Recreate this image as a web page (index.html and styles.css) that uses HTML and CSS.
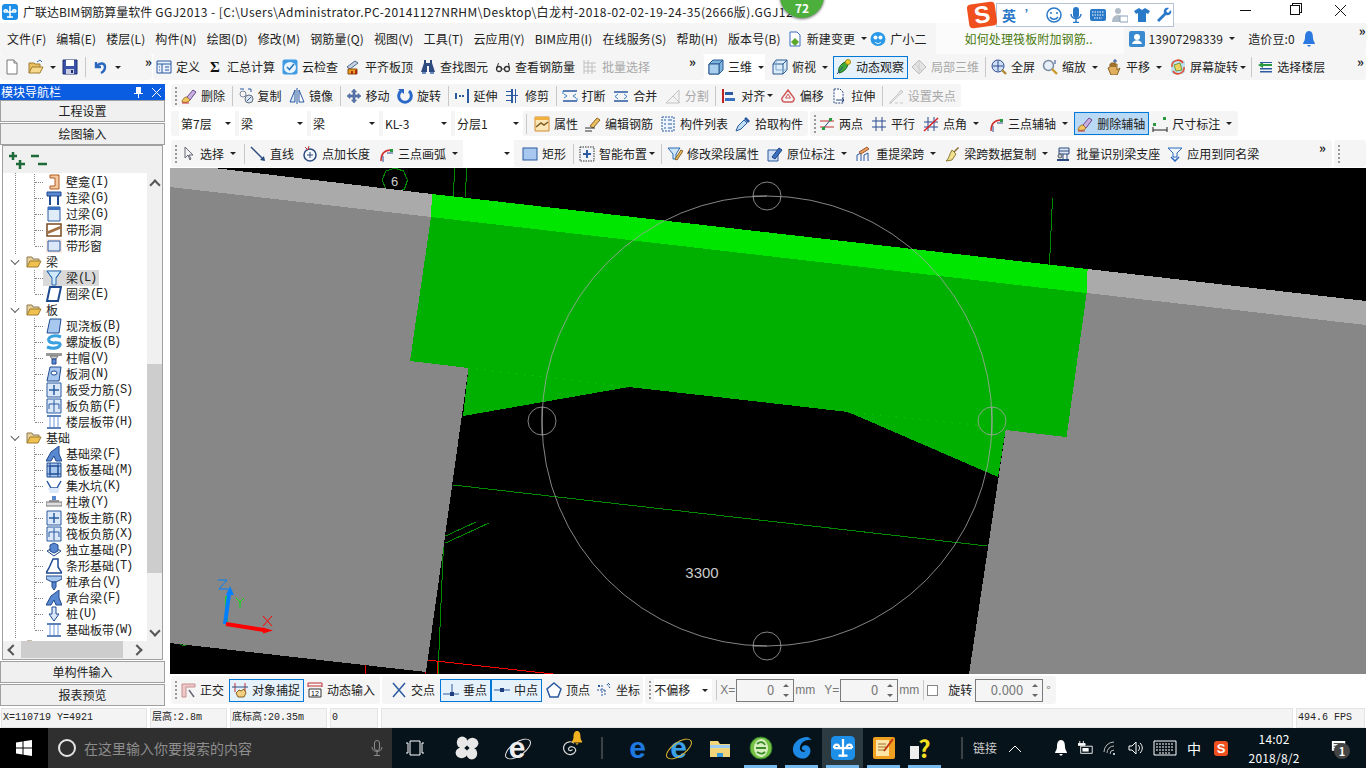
FILE: index.html
```html
<!DOCTYPE html>
<html lang="zh-CN">

<head>
    <meta charset="UTF-8">
    <title>广联达BIM钢筋算量软件 GGJ2013</title>
    <link rel="stylesheet" href="styles.css">
</head>

<body>
    <!-- Icon set -->
    <svg class="defs" width="0" height="0">
        <symbol id="new" viewBox="0 0 16 16"><path d="M3 1h7l3 3v11H3z" fill="#fff" stroke="#777"/><path d="M10 1v3h3" fill="#ddd" stroke="#777"/></symbol>
        <symbol id="open" viewBox="0 0 16 16"><path d="M1 14V4h5l1 1h5v3" fill="#e8c060" stroke="#a07c30"/><path d="M1 14l3-6h11l-3 6z" fill="#f6d98a" stroke="#a07c30"/><path d="M9 3l3-2 2 2" fill="none" stroke="#3a70c0"/></symbol>
        <symbol id="save" viewBox="0 0 16 16"><path d="M1 1h14v14H1z" fill="#3a52a8" stroke="#1f2f70"/><path d="M4 1h8v6H4z" fill="#fff"/><path d="M4 10h8v5H4z" fill="#c8cce0"/><path d="M9 11h2v3H9z" fill="#1f2f70"/></symbol>
        <symbol id="undo" viewBox="0 0 16 16"><path d="M3 3v5h5M4 7c3-4 8-3 8 1 0 3-2 5-4 6" fill="none" stroke="#2a68c0" stroke-width="2.4"/></symbol>
        <symbol id="define" viewBox="0 0 16 16"><path d="M1 2h14v12H1z" fill="#e8f0fa" stroke="#2a5aa0"/><path d="M1 5h14M6 5v9M9 8h4M9 11h4M3 8h1M3 11h1" stroke="#2a5aa0"/></symbol>
        <symbol id="cloud" viewBox="0 0 16 16"><rect x="0.5" y="0.5" width="15" height="15" rx="2" fill="#3f9be4"/><ellipse cx="8" cy="8.500" rx="6" ry="5.500" fill="#eaf5fd"/><path d="M5 8l2.500 2.500L12 5" fill="none" stroke="#2a78c0" stroke-width="1.600"/></symbol>
        <symbol id="flat" viewBox="0 0 16 16"><path d="M2 8l8-6 3 2-8 6z" fill="#c8d4e4" stroke="#4a6a90"/><path d="M3 10h9v5H3z" fill="#e8a020" stroke="#8a4a10"/><path d="M6 12h2v3H6zM10 11h2v4h-2z" fill="#b02a10"/></symbol>
        <symbol id="binoc" viewBox="0 0 16 16"><path d="M4 1h2v3h4V1h2v3l3 9H9V7H7v6H1l3-9z" fill="#2f4a80"/><path d="M2 13h4v2H2zM10 13h4v2h-4z" fill="#6a8ac0"/></symbol>
        <symbol id="glasses" viewBox="0 0 16 16"><circle cx="4" cy="10" r="2.500" fill="none" stroke="#333" stroke-width="1.300"/><circle cx="12" cy="10" r="2.500" fill="none" stroke="#333" stroke-width="1.300"/><path d="M6.500 10h3M1.500 10l2-6M14.500 10l-1-6" fill="none" stroke="#333"/></symbol>
        <symbol id="batch" viewBox="0 0 16 16"><path d="M2 1v14M2 4h12M2 8h12M2 12h12M6 1v14M10 4v11" fill="none" stroke="#c0c0c0"/></symbol>
        <symbol id="cube" viewBox="0 0 16 16"><path d="M1 5l4-4h10v10l-4 4H1z" fill="#7fb4e0" stroke="#2a5a90"/><path d="M1 5h10v10M11 5l4-4" fill="none" stroke="#2a5a90"/><path d="M1 5h10v10H1z" fill="#a8d0ee" stroke="#2a5a90"/></symbol>
        <symbol id="top" viewBox="0 0 16 16"><path d="M4 1h11v10l-4 4H1V5z" fill="#dcecf8" stroke="#2a5a90"/><path d="M1 5h10v10M11 5l4-4" fill="none" stroke="#2a5a90"/><path d="M4 1v10h11" fill="none" stroke="#7fa8d0"/></symbol>
        <symbol id="orbit" viewBox="0 0 16 16"><path d="M3 14C1 9 6 3 12 2c1 5-3 11-9 12z" fill="#3fa83a" stroke="#1f6a20"/><circle cx="12" cy="3" r="2.500" fill="#f0d030" stroke="#a08a10"/><path d="M1 15L7 8" stroke="#2a4a90"/></symbol>
        <symbol id="local3d" viewBox="0 0 16 16"><path d="M1 8l7-7 7 7-7 7z" fill="#e4e4e4" stroke="#bbb"/><path d="M4 5l7 7M8 1v14" stroke="#ccc"/></symbol>
        <symbol id="full" viewBox="0 0 16 16"><circle cx="7" cy="7" r="6" fill="#cfe0f4" stroke="#2a4a90"/><path d="M7 2v10M2 7h10" stroke="#2a4a90"/><path d="M11 11l4 4" stroke="#b08a30" stroke-width="2.400"/></symbol>
        <symbol id="zoom" viewBox="0 0 16 16"><circle cx="6.500" cy="6.500" r="5" fill="#e6eef8" stroke="#7a8aa0" stroke-width="1.500"/><path d="M10 10l5 5" stroke="#c89a30" stroke-width="2.400"/><path d="M13 1v4" stroke="#2a4a90"/></symbol>
        <symbol id="pan" viewBox="0 0 16 16"><path d="M4 8V5h1v3-4h2v4-4h2v4-3h2v6l3-2-3 7H5L2 9z" fill="#e0b060" stroke="#8a6020"/><path d="M9 0v4M7 2h4" stroke="#2a4a90"/></symbol>
        <symbol id="rot" viewBox="0 0 16 16"><path d="M3 1h10l2 2v10l-2 2H3l-2-2V3z" fill="#bfe0f0"/><path d="M4 6l6-2 2 7-6 1z" fill="#f0d060" stroke="#60a040"/><path d="M2 8a6 6 0 0 1 11-4M14 8a6 6 0 0 1-11 4" fill="none" stroke="#e04a30" stroke-width="1.500"/></symbol>
        <symbol id="floor" viewBox="0 0 16 16"><path d="M1 6L6 3v6zM6 5h9v2H6z" fill="#2a9a40"/><path d="M3 9h12v1.500H3zM3 12h12v1.500H3zM3 3h12v1H3z" fill="#2a5aa0"/></symbol>
        <symbol id="erase" viewBox="0 0 16 16"><path d="M6 9l6-7 3 2-6 8z" fill="#c8b0e0" stroke="#6a4a90"/><path d="M1 14c1-4 3-5 5-5l3 3c-1 2-4 3-8 2z" fill="#f0c860" stroke="#a07030"/><path d="M1 15h7" stroke="#d03030"/></symbol>
        <symbol id="copy" viewBox="0 0 16 16"><circle cx="5" cy="6" r="3" fill="none" stroke="#7a8a9a"/><circle cx="11" cy="11" r="4" fill="#dfe6ee" stroke="#5a6a7a"/><path d="M9 13l4-4M2 1h4M10 1h3v3" fill="none" stroke="#2a5aa0"/></symbol>
        <symbol id="mirror" viewBox="0 0 16 16"><path d="M6 2L1 14h5z" fill="#dbe8f6" stroke="#2a5aa0"/><path d="M10 2l5 12h-5z" fill="#fff" stroke="#2a5aa0"/><path d="M8 0v16" stroke="#2a5aa0"/></symbol>
        <symbol id="move" viewBox="0 0 16 16"><path d="M8 1L5.500 4H7v3H4V5.500L1 8l3 2.500V9h3v3H5.500L8 15l2.500-3H9V9h3v1.500L15 8l-3-2.500V7H9V4h1.500z" fill="#5a7ab0" stroke="#2a4a80" stroke-width=".5"/></symbol>
        <symbol id="rotate" viewBox="0 0 16 16"><path d="M4 3a6.300 6.300 0 1 0 8 0" fill="none" stroke="#2a68c8" stroke-width="3"/><path d="M1 1h6v5z" fill="#2a68c8"/></symbol>
        <symbol id="extend" viewBox="0 0 16 16"><path d="M1 5h2v6H1zM5 7h2v2H5zM8 7h2v2H8zM13 1h2v14h-2z" fill="#2a5aa0"/></symbol>
        <symbol id="trim" viewBox="0 0 16 16"><path d="M1 3h6v1H1zM1 7h12v1H1zM1 12h6v1H1zM6 1h2v14H6zM10 1h1v14h-1z" fill="#2a5aa0"/></symbol>
        <symbol id="break" viewBox="0 0 16 16"><path d="M1 3h14M1 13h14" stroke="#2a5aa0" stroke-width="1.500"/><path d="M2 6l3 2-3 2M14 6l-3 2 3 2M1 3v3M15 10v3" fill="none" stroke="#3a80d0"/></symbol>
        <symbol id="merge" viewBox="0 0 16 16"><path d="M1 4h14M1 13h14" stroke="#2a5aa0" stroke-width="1.500"/><path d="M5 6L2 8.500 5 11M11 6l3 2.500-3 2.500" fill="none" stroke="#3a80d0"/></symbol>
        <symbol id="split" viewBox="0 0 16 16"><path d="M1 15L14 2v13zM8 8l7 7" fill="#f2f2f2" stroke="#c4c4c4"/></symbol>
        <symbol id="align" viewBox="0 0 16 16"><path d="M2 1v14" stroke="#c02020" stroke-width="2"/><path d="M4 4h8v3H4z" fill="#2a5aa0"/><path d="M4 10h10v3H4z" fill="#3a70c0"/></symbol>
        <symbol id="offset" viewBox="0 0 16 16"><path d="M8 2l6 8a3 3 0 0 1-3 4H5a3 3 0 0 1-3-4z" fill="#f4f4f4" stroke="#d05a5a" stroke-width="1.500"/><path d="M8 6l2.500 4h-5z" fill="none" stroke="#d05a5a"/></symbol>
        <symbol id="stretch" viewBox="0 0 16 16"><path d="M3 1h6l3 3v11H3z" fill="#fff" stroke="#2a4a80" stroke-dasharray="2 1"/><path d="M5 12h8M11 10l2 2-2 2" fill="none" stroke="#2a4a80"/></symbol>
        <symbol id="grip" viewBox="0 0 16 16"><path d="M2 14l8-8 3-4 2 2-4 3-8 8z" fill="#e8e8e8" stroke="#c8c8c8"/><path d="M1 15h3M7 15h3M12 15h3" stroke="#c8c8c8"/></symbol>
        <symbol id="prop" viewBox="0 0 16 16"><path d="M1 1h14v14H1z" fill="#fbe6b8" stroke="#d08a30"/><path d="M1 1h14v3H1z" fill="#f0b040"/><path d="M2 11l5-4 3 2 4-3" fill="none" stroke="#7a5a20" stroke-width="1.500"/></symbol>
        <symbol id="editbar" viewBox="0 0 16 16"><path d="M5 10l7-8 3 2-7 8z" fill="#e8c060" stroke="#8a6020"/><path d="M0 12h10M0 15h7" stroke="#333"/></symbol>
        <symbol id="list" viewBox="0 0 16 16"><path d="M2 1h12v14H2z" fill="#eef4fb" stroke="#2a5aa0" stroke-dasharray="2 1"/><path d="M4 4h2M8 4h4M4 8h2M8 8h4M4 12h2M8 12h4" stroke="#2a5aa0"/></symbol>
        <symbol id="pick" viewBox="0 0 16 16"><path d="M1 15l2-5 6-6 3 3-6 6z" fill="#bfe0f4" stroke="#2a5aa0"/><path d="M9 3l2-2 4 4-2 2z" fill="#2a5aa0"/></symbol>
        <symbol id="twopt" viewBox="0 0 16 16"><path d="M1 5h14M1 11h14" stroke="#c03030"/><path d="M3 14L13 2" stroke="#2a4a80"/><rect x="10" y="2" width="3" height="3" fill="#2a9a40"/><rect x="3" y="11" width="3" height="3" fill="#2a9a40"/></symbol>
        <symbol id="para" viewBox="0 0 16 16"><path d="M1 5h14M1 11h14M5 1v14M11 1v14" stroke="#2a4a90"/></symbol>
        <symbol id="angle" viewBox="0 0 16 16"><path d="M5 1v14M11 1v14M1 6h14M1 11h14" stroke="#2a4a90"/><path d="M1 15L15 2" stroke="#e02020" stroke-width="1.500"/></symbol>
        <symbol id="arc3" viewBox="0 0 16 16"><path d="M3 15c0-8 4-11 10-11" fill="none" stroke="#d02a2a" stroke-width="1.500"/><path d="M9 7h6M5 10v6" stroke="#2a4a90"/><rect x="12" y="3" width="3" height="3" fill="#2a9a40"/></symbol>
        <symbol id="dim" viewBox="0 0 16 16"><path d="M1 11v5M15 11v5M1 14h14" stroke="#222"/><rect x="1" y="7" width="3" height="3" fill="#2a9a40"/><rect x="11" y="1" width="3" height="3" fill="#2a9a40"/></symbol>
        <symbol id="arrow" viewBox="0 0 16 16"><path d="M5 1v11l3-3 2 5 1-1-2-4h4z" fill="#f4f4f4" stroke="#667"/></symbol>
        <symbol id="line" viewBox="0 0 16 16"><path d="M1 1l13 13" stroke="#2a4a80" stroke-width="1.500"/><path d="M15 15l-5-1 4-4z" fill="#2a4a80"/></symbol>
        <symbol id="ptlen" viewBox="0 0 16 16"><circle cx="8" cy="9" r="6" fill="#f4f8fd" stroke="#2a4a80" stroke-width="1.500"/><path d="M8 6v6M5 9h6" stroke="#2a4a80"/><path d="M3 1l3 3 1-4" fill="none" stroke="#c03030"/></symbol>
        <symbol id="rect" viewBox="0 0 16 16"><rect x="1" y="2" width="14" height="12" fill="#a8c8f0" stroke="#2a5aa0"/></symbol>
        <symbol id="smart" viewBox="0 0 16 16"><path d="M1 1h14v14H1z" fill="#f0f4f8" stroke="#333" stroke-dasharray="1.500 1"/><path d="M8 4v8M4 8h8" stroke="#2a5aa0" stroke-width="2"/></symbol>
        <symbol id="beamedit" viewBox="0 0 16 16"><path d="M1 2h12L9 8v5H6V8z" fill="#cfe6fa" stroke="#2a6ab0"/><path d="M8 13l6-9 2 1-6 9z" fill="#e8c060" stroke="#8a6020"/></symbol>
        <symbol id="origin" viewBox="0 0 16 16"><path d="M1 4h10v11H1z" fill="#cfe0f4" stroke="#2a5aa0"/><path d="M5 11l7-9 3 2-7 9z" fill="#3a70c0" stroke="#1f3f80"/></symbol>
        <symbol id="repick" viewBox="0 0 16 16"><path d="M1 15V9l4-2v8M8 15V9l4-2v8" fill="none" stroke="#2a5aa0"/><path d="M3 6l8-5 2 2-8 5z" fill="#e8a060" stroke="#a05a30"/></symbol>
        <symbol id="brush" viewBox="0 0 16 16"><path d="M9 6l5-5 1 1-5 5z" fill="#8a6a30"/><path d="M8 4l4 4-4 6-6 1c3-2 3-6 6-11z" fill="#f0e090" stroke="#8a7a30"/></symbol>
        <symbol id="recog" viewBox="0 0 16 16"><path d="M3 2h10v6H3z" fill="#dfe8f4" stroke="#2a4a80"/><path d="M3 5h10M7 8v5M11 8v5" stroke="#2a4a80"/><path d="M1 14h12" stroke="#2a4a80" stroke-width="2"/><circle cx="4" cy="10" r="2" fill="#c0d0e0" stroke="#555"/></symbol>
        <symbol id="samename" viewBox="0 0 16 16"><path d="M1 2h14l-5 5v4H6V7z" fill="#f0f6fc" stroke="#2a68c0"/><path d="M4 11l4 4 4-4" fill="none" stroke="#2a68c0" stroke-width="1.500"/></symbol>
        <symbol id="ortho" viewBox="0 0 16 16"><path d="M2 2h13v3H6v10H2z" fill="#f0c8c8" stroke="#c49090"/><path d="M9 8l5 7" stroke="#667" stroke-width="1.500"/></symbol>
        <symbol id="snap" viewBox="0 0 16 16"><path d="M3 1v9M13 1v9" stroke="#c03030"/><path d="M0 5h16" stroke="#2a4a80"/><path d="M4 11l3-3 2 1 3-2 2 4-2 4H6z" fill="#f0d080" stroke="#8a6020"/></symbol>
        <symbol id="cross" viewBox="0 0 16 16"><path d="M2 1l12 14M14 1L2 15" stroke="#2a5aa0" stroke-width="1.500"/></symbol>
        <symbol id="perp" viewBox="0 0 16 16"><path d="M0 12h16M9 2v12" stroke="#2a5aa0"/><rect x="7" y="10" width="4" height="4" fill="#1f3f80"/></symbol>
        <symbol id="mid" viewBox="0 0 16 16"><path d="M0 8h16" stroke="#2a5aa0"/><rect x="6" y="6" width="4" height="4" fill="#1f3f80"/></symbol>
        <symbol id="vertex" viewBox="0 0 16 16"><path d="M8 1l7 6-3 8H4L1 7z" fill="#fff" stroke="#2a5aa0" stroke-width="1.500"/></symbol>
        <symbol id="coord" viewBox="0 0 16 16"><path d="M1 8h8M6 3v12M9 8v5M11 2l3 4" fill="none" stroke="#2a5aa0" stroke-dasharray="2 1"/><path d="M2 3l2 2M4 3L2 5M12 1l2 2" stroke="#2a5aa0"/></symbol>
        <symbol id="plus" viewBox="0 0 18 18"><path d="M1 5h8M5 1v8M8 13h9M12 9v9" stroke="#1f6a3a" stroke-width="2.500"/></symbol>
        <symbol id="minus" viewBox="0 0 18 18"><path d="M1 5h8M8 13h9" stroke="#1f6a3a" stroke-width="2.500"/></symbol>
        <symbol id="folder" viewBox="0 0 16 16"><path d="M1 13V3h5l1 2h6v3" fill="#e8d098" stroke="#8a7a50"/><path d="M1 13l3-6h11l-3 6z" fill="#f0c050" stroke="#a07c30"/></symbol>
        <symbol id="t-niche" viewBox="0 0 16 16"><path d="M4 1h9v14H4v-3h5V4H4z" fill="#f4c8a0" stroke="#b05a20"/></symbol>
        <symbol id="t-lintel" viewBox="0 0 16 16"><path d="M1 2h14v4H1z" fill="#5a88d0" stroke="#1f4a90"/><path d="M4 6v9M12 6v9" stroke="#1f4a90" stroke-width="2"/></symbol>
        <symbol id="t-over" viewBox="0 0 16 16"><path d="M2 1h12v14H2z" fill="#e0ecf8" stroke="#2a5aa0"/><path d="M2 1h12v3H2z" fill="#3a70c0"/></symbol>
        <symbol id="t-bandhole" viewBox="0 0 16 16"><path d="M1 2h14v12H1z" fill="#fff" stroke="#7a4a20" stroke-width="1.500"/><path d="M2 9l12-5v3L2 12z" fill="#a07040"/></symbol>
        <symbol id="t-bandwin" viewBox="0 0 16 16"><path d="M0 1h16v14H0z" fill="#fbe8e0"/><path d="M2 3h12v10H2z" fill="#dbe8fa" stroke="#2a5aa0"/></symbol>
        <symbol id="t-beam" viewBox="0 0 16 16"><path d="M1 1h14L10 8v7H6V8z" fill="#cfe8fa" stroke="#2a6ab0"/><path d="M6 8L1 1M10 8l5-7" fill="none" stroke="#2a6ab0"/></symbol>
        <symbol id="t-ring" viewBox="0 0 16 16"><path d="M4 1h11l-3 14H1z" fill="#fff" stroke="#1f4a90" stroke-width="2"/></symbol>
        <symbol id="t-slab" viewBox="0 0 16 16"><path d="M4 1h11l-2 14H1z" fill="#a8c8f0" stroke="#1f4a90"/></symbol>
        <symbol id="t-spiral" viewBox="0 0 16 16"><path d="M15 3C8 0 1 3 3 7s10 0 11 3-6 6-13 3" fill="none" stroke="#3aa0e0" stroke-width="3"/></symbol>
        <symbol id="t-cap" viewBox="0 0 16 16"><path d="M0 3h16v3H0z" fill="#999"/><path d="M4 6h8l-2 3H6z" fill="#ccc" stroke="#777"/><path d="M6 9h4v5H6z" fill="#5a88d0" stroke="#1f4a90"/></symbol>
        <symbol id="t-hole" viewBox="0 0 16 16"><path d="M4 1h11l-2 14H1z" fill="#a8c8f0" stroke="#1f4a90"/><ellipse cx="8" cy="7" rx="3" ry="2" fill="#fff" stroke="#1f4a90"/></symbol>
        <symbol id="t-grid1" viewBox="0 0 16 16"><path d="M1 1h14v14H1z" fill="#dbe8fa" stroke="#2a5aa0"/><path d="M8 3v10M3 8h10" stroke="#2a5aa0" stroke-width="1.500"/></symbol>
        <symbol id="t-grid2" viewBox="0 0 16 16"><path d="M1 1h14v14H1z" fill="#dbe8fa" stroke="#2a5aa0"/><path d="M3 6h10v5M3 6v5M8 2v12" fill="none" stroke="#2a5aa0"/></symbol>
        <symbol id="t-band" viewBox="0 0 16 16"><path d="M1 2h14M1 14h14" stroke="#2a5aa0" stroke-width="1.500"/><path d="M4 3v10M8 3v10M12 3v10" stroke="#6a98d8"/></symbol>
        <symbol id="t-fbeam" viewBox="0 0 16 16"><path d="M0 15l5-9 8-6v8l3 7H10L8 10 5 15z" fill="#5a88d0" stroke="#1f4a90"/></symbol>
        <symbol id="t-raft" viewBox="0 0 16 16"><path d="M1 1h14v14H1zM4 4h8v8H4z" fill="#a8c8f0" stroke="#1f4a90"/><path d="M1 4h14M1 12h14M4 1v14M12 1v14" stroke="#1f4a90"/></symbol>
        <symbol id="t-pit" viewBox="0 0 16 16"><path d="M1 3l4 7h6l4-7" fill="none" stroke="#2a5aa0" stroke-width="1.500"/><path d="M2 10h12l-2 5H4z" fill="#dbe8fa"/></symbol>
        <symbol id="t-pier" viewBox="0 0 16 16"><path d="M6 2h4v4H6z" fill="#5a88d0"/><path d="M3 6h10v2H3z" fill="#999"/><path d="M0 8h16v4H0z" fill="#ddd" stroke="#777"/></symbol>
        <symbol id="t-iso" viewBox="0 0 16 16"><path d="M1 9l7 5 7-5-7-4z" fill="#f0f4f8" stroke="#1f4a90"/><path d="M4 9V3l4-2 4 2v6l-4 2z" fill="#5a88d0" stroke="#1f4a90"/></symbol>
        <symbol id="t-strip" viewBox="0 0 16 16"><path d="M0 15l3-5 4-9h5v8l4 6z" fill="#fff" stroke="#1f4a90" stroke-width="1.500"/></symbol>
        <symbol id="t-pile" viewBox="0 0 16 16"><path d="M0 2h16v3L10 8H6L0 5z" fill="#a8c8f0" stroke="#1f4a90"/><path d="M6 8h4v5l-2 3-2-3z" fill="#5a88d0" stroke="#1f4a90"/></symbol>
        <symbol id="t-pile2" viewBox="0 0 16 16"><path d="M6 1h4v7h3l-5 7-5-7h3z" fill="#dbe8fa" stroke="#1f4a90"/></symbol>
        <symbol id="app" viewBox="0 0 16 16"><rect width="16" height="16" rx="3" fill="#1e8fe8"/><path d="M8 2v12M2 8h12M2 8c0-3 3.500-3 3.500 0M14 8c0-3-3.500-3-3.500 0M5 13h6" fill="none" stroke="#fff" stroke-width="1.500"/></symbol>
        <symbol id="doc-green" viewBox="0 0 16 16"><path d="M3 1h7l3 3v11H3z" fill="#fff" stroke="#3a70c0"/><path d="M8 7l4 4-4 4-4-4z" fill="#5aa82a"/></symbol>
        <symbol id="mascot" viewBox="0 0 16 16"><ellipse cx="8" cy="8" rx="7.500" ry="7" fill="#2a9ae8"/><circle cx="5.500" cy="6.500" r="2" fill="#fff"/><circle cx="10.500" cy="6.500" r="2" fill="#fff"/><path d="M5 11c2 2 4 2 6 0" fill="none" stroke="#fff"/></symbol>
        <symbol id="user" viewBox="0 0 16 16"><rect width="16" height="16" rx="2" fill="#3a8ad0"/><circle cx="8" cy="6" r="3" fill="#fff"/><path d="M3 13c1-5 9-5 10 0z" fill="#fff"/></symbol>
        <symbol id="bell" viewBox="0 0 16 16"><path d="M8 0c3 0 4 3 4 7 0 3 2 4 2 6H2c0-2 2-3 2-6 0-4 1-7 4-7z" fill="currentColor"/><path d="M6 14h4l-2 2z" fill="currentColor"/></symbol>
        <symbol id="win" viewBox="0 0 16 16"><path d="M0 2.500L6.500 1.500v6H0zM7.500 1.300L16 0v7.500H7.500zM0 8.500h6.500v6L0 13.500zM7.500 8.500H16V16l-8.500-1.300z" fill="#fff"/></symbol>
        <symbol id="mic" viewBox="0 0 16 16"><rect x="5.500" y="0.500" width="5" height="10" rx="2.500" fill="none" stroke="currentColor"/><path d="M3 7c0 6 10 6 10 0M8 12v3M5 15.500h6" fill="none" stroke="currentColor"/></symbol>
        <symbol id="mic-solid" viewBox="0 0 16 16"><rect x="5" y="0" width="6" height="11" rx="3" fill="#2a78c8"/><path d="M3 7c0 6 10 6 10 0M8 12v3M5 15.500h6" fill="none" stroke="#2a78c8" stroke-width="1.500"/></symbol>
        <symbol id="taskview" viewBox="0 0 20 16"><path d="M5 1h10v14H5zM1 3h2v10H1M19 3h-2v10h2" fill="none" stroke="#fff"/></symbol>
        <symbol id="fan" viewBox="0 0 20 20"><g fill="#e8e8e8"><ellipse cx="6" cy="5.500" rx="4.500" ry="5"/><ellipse cx="14.500" cy="6" rx="5" ry="4.500"/><ellipse cx="14" cy="14.500" rx="4.500" ry="5"/><ellipse cx="5.500" cy="14" rx="5" ry="4.500"/></g><circle cx="10" cy="10" r="1.500" fill="#07131a"/></symbol>
        <symbol id="swirl" viewBox="0 0 20 20"><path d="M15 4a8 8 0 1 0 2 10c1-5-7-8-9-3 0 3 4 3 5 1" fill="none" stroke="#d8d8d8" stroke-width="1.500"/></symbol>
        <symbol id="explorer" viewBox="0 0 24 24"><path d="M2 5h8l2 3h10v13H2z" fill="#f4d67a"/><path d="M2 9h20v3H2z" fill="#9ccdf0"/><path d="M9 17h6v4H9z" fill="#3a9ad8"/></symbol>
        <symbol id="ball" viewBox="0 0 24 24"><circle cx="12" cy="12" r="11" fill="#76c043" stroke="#2a7a2a"/><ellipse cx="12" cy="12" rx="7" ry="9" fill="#d8f0c0"/><path d="M7 12h10M8 8c3-3 7-2 8 1M8 16c3 2 6 2 8 0" fill="none" stroke="#3a8a2a" stroke-width="1.800"/></symbol>
        <symbol id="swoosh" viewBox="0 0 24 24"><path d="M18 1C8 1 2 8 3 15c1 6 8 9 13 7 5-3 6-9 2-12-3-2-7 0-6 3 1 2 4 2 4 1-2 4-7 1-6-3 1-5 6-8 12-7z" fill="#1e88e5"/></symbol>
        <symbol id="note" viewBox="0 0 24 24"><rect x="1" y="1" width="22" height="22" rx="2" fill="#f0a020"/><path d="M4 4h13v16H4z" fill="#fbe6a8"/><path d="M6 8h8M6 11h8M6 14h6" stroke="#a07030"/><path d="M12 15L21 3" stroke="#c03a10" stroke-width="2"/></symbol>
        <symbol id="wifi" viewBox="0 0 16 16"><path d="M1 12a10 10 0 0 1 10-10M4 13a7 7 0 0 1 7-7M7 14a4 4 0 0 1 4-4" fill="none" stroke="#bbb"/><circle cx="11" cy="14" r="1" fill="#fff"/></symbol>
        <symbol id="vol" viewBox="0 0 16 16"><path d="M1 6h3l4-4v12l-4-4H1z" fill="none" stroke="#fff"/><path d="M10 5c2 2 2 4 0 6M12 3c3 3 3 7 0 10" fill="none" stroke="#fff"/></symbol>
        <symbol id="batt" viewBox="0 0 18 16"><path d="M3 6h13v8H3z" fill="none" stroke="#fff"/><path d="M5 8h7v4H5z" fill="#fff"/><path d="M2 0v3M6 0v3M0 3h8v2H0z" fill="#fff" stroke="#fff"/></symbol>
        <symbol id="kbd" viewBox="0 0 24 16"><path d="M1 1h22v14H1z" fill="none" stroke="#fff"/><path d="M3 4h18M3 7h18M3 10h18M6 13h12" stroke="#fff" stroke-dasharray="2 1"/></symbol>
        <symbol id="msg" viewBox="0 0 18 18"><path d="M1 1h15v11h-4l-3 3v-3H1z" fill="#fff"/><path d="M3 4h11M3 7h11M3 10h7" stroke="#333"/></symbol>
        <symbol id="smile" viewBox="0 0 16 16"><circle cx="8" cy="8" r="7" fill="none" stroke="#2a78c8" stroke-width="1.500"/><path d="M5 5v2M11 5v2" stroke="#2a78c8" stroke-width="1.500"/><path d="M4 10c2 3 6 3 8 0" fill="none" stroke="#2a78c8" stroke-width="1.500"/></symbol>
        <symbol id="key" viewBox="0 0 16 16"><rect y="2" width="16" height="12" rx="2" fill="#2a78c8"/><path d="M2 5h12M2 8h12M4 11h8" stroke="#fff" stroke-dasharray="1.500 1"/></symbol>
        <symbol id="imeuser" viewBox="0 0 16 16"><circle cx="6" cy="4" r="3" fill="#b0bcc8"/><path d="M0 15c0-6 4-7 6-7s4 1 5 3v4z" fill="#b0bcc8"/><path d="M8 9h8v6H8z" fill="#fff" stroke="#8aa0b8"/></symbol>
        <symbol id="shirt" viewBox="0 0 16 16"><path d="M5 1l3 2 3-2 5 3-2 3-2-1v9H4V6L2 7 0 4z" fill="#2a78c8"/></symbol>
        <symbol id="wrench" viewBox="0 0 16 16"><path d="M15 3l-3 3-2-2 3-3c-3-1-6 1-5 5L1 13l2 2 7-7c4 1 6-2 5-5z" fill="#2a78c8"/></symbol>
    </svg>

    <div class="app">
        <header class="titlebar">
            <svg class="ico"><use href="#app"/></svg>
            <span class="title-text">广联达BIM钢筋算量软件<span class="title-path"> GGJ2013 - [C:\Users\Administrator.PC-20141127NRHM\Desktop\白龙村-2018-02-02-19-24-35(2666版).GGJ12</span></span>
            <span class="score">72</span>
            <div class="ime">
                <span class="ime-logo">S</span>
                <div class="ime-bar">
                    <b>英</b>
                    <span class="ime-dot">’</span>
                    <svg class="ico"><use href="#smile"/></svg>
                    <svg class="ico"><use href="#mic-solid"/></svg>
                    <svg class="ico"><use href="#key"/></svg>
                    <svg class="ico"><use href="#imeuser"/></svg>
                    <svg class="ico"><use href="#shirt"/></svg>
                    <svg class="ico"><use href="#wrench"/></svg>
                </div>
            </div>
            <div class="winbtns">
                <span class="win-min"></span>
                <span class="win-max"></span>
                <svg class="win-close" viewBox="0 0 11 11"><path d="M0 0l11 11M11 0L0 11" stroke="#111"/></svg>
            </div>
        </header>

        <nav class="menubar">
            <span>文件(F)</span><span>编辑(E)</span><span>楼层(L)</span><span>构件(N)</span><span>绘图(D)</span><span>修改(M)</span><span>钢筋量(Q)</span><span>视图(V)</span><span>工具(T)</span><span>云应用(Y)</span><span>BIM应用(I)</span><span>在线服务(S)</span><span>帮助(H)</span><span class="menu-last">版本号(B)</span>
            <span class="tool menu-tool"><svg class="ico"><use href="#doc-green"/></svg><span>新建变更</span><i class="caret"></i></span>
            <span class="tool menu-tool"><svg class="ico"><use href="#mascot"/></svg><span>广小二</span></span>
            <span class="news">如何处理筏板附加钢筋..</span>
            <span class="tool menu-tool"><svg class="ico"><use href="#user"/></svg><span>13907298339</span><i class="caret"></i></span>
            <span class="beans">造价豆:0</span>
            <svg class="ico notify"><use href="#bell"/></svg>
            <span class="more menu-more">»</span>
        </nav>

        <div class="tbrow tbrow-first">
            <div class="tbgroup g-file">
                <svg class="ico ml4"><use href="#new"/></svg>
                <svg class="ico ml8"><use href="#open"/></svg><i class="caret c-s"></i>
                <svg class="ico"><use href="#save"/></svg>
                <span class="sep"></span>
                <svg class="ico"><use href="#undo"/></svg><i class="caret c-s"></i>
                <span class="more">»</span>
            </div>
            <div class="tbgroup g-calc">
                <span class="tool"><svg class="ico"><use href="#define"/></svg><span>定义</span></span>
                <span class="tool"><span class="sigma">Σ</span><span>汇总计算</span></span>
                <span class="tool"><svg class="ico"><use href="#cloud"/></svg><span>云检查</span></span>
                <span class="tool"><svg class="ico"><use href="#flat"/></svg><span>平齐板顶</span></span>
                <span class="tool"><svg class="ico"><use href="#binoc"/></svg><span>查找图元</span></span>
                <span class="tool"><svg class="ico"><use href="#glasses"/></svg><span>查看钢筋量</span></span>
                <span class="tool off"><svg class="ico"><use href="#batch"/></svg><span>批量选择</span></span>
                <span class="more">»</span>
            </div>
            <div class="tbgroup g-view">
                <span class="tool tool-white"><svg class="ico"><use href="#cube"/></svg><span>三维</span><i class="caret"></i></span>
                <span class="tool"><svg class="ico"><use href="#top"/></svg><span>俯视</span><i class="caret"></i></span>
                <span class="tool on"><svg class="ico"><use href="#orbit"/></svg><span>动态观察</span></span>
                <span class="tool off"><svg class="ico"><use href="#local3d"/></svg><span>局部三维</span></span>
                <span class="sep"></span>
                <span class="tool"><svg class="ico"><use href="#full"/></svg><span>全屏</span></span>
                <span class="tool"><svg class="ico"><use href="#zoom"/></svg><span>缩放</span><i class="caret"></i></span>
                <span class="tool"><svg class="ico"><use href="#pan"/></svg><span>平移</span><i class="caret"></i></span>
                <span class="tool"><svg class="ico"><use href="#rot"/></svg><span>屏幕旋转</span><i class="caret c-t"></i></span>
                <span class="sep"></span>
                <span class="tool"><svg class="ico"><use href="#floor"/></svg><span>选择楼层</span></span>
                <span class="more more-end">»</span>
            </div>
        </div>

        <div class="workspace">
            <aside class="nav">
                <div class="nav-head"><span>模块导航栏</span>
                    <svg class="nav-pin" viewBox="0 0 9 11"><path d="M2 0h5v6h2v1H5v4H4V7H0V6h2z" fill="#fff"/></svg>
                    <svg class="nav-x" viewBox="0 0 9 9"><path d="M0 0l9 9M9 0L0 9" stroke="#fff"/></svg>
                </div>
                <button class="nav-btn">工程设置</button>
                <button class="nav-btn">绘图输入</button>
                <div class="nav-box">
                    <div class="nav-tools">
                        <svg class="ico-l"><use href="#plus"/></svg>
                        <svg class="ico-l"><use href="#minus"/></svg>
                    </div>
                    <div class="tree-wrap">
                        <div class="tree">
                            <div class="kids">
                                <div class="leaf"><span class="leaf-body"><svg class="ico"><use href="#t-niche"/></svg>壁龛<i>(I)</i></span></div>
                                <div class="leaf"><span class="leaf-body"><svg class="ico"><use href="#t-lintel"/></svg>连梁<i>(G)</i></span></div>
                                <div class="leaf"><span class="leaf-body"><svg class="ico"><use href="#t-over"/></svg>过梁<i>(G)</i></span></div>
                                <div class="leaf"><span class="leaf-body"><svg class="ico"><use href="#t-bandhole"/></svg>带形洞</span></div>
                                <div class="leaf"><span class="leaf-body"><svg class="ico"><use href="#t-bandwin"/></svg>带形窗</span></div>
                            </div>
                            <div class="group"><span class="chev"></span><svg class="ico"><use href="#folder"/></svg><span>梁</span></div>
                            <div class="kids">
                                <div class="leaf"><span class="leaf-body sel"><svg class="ico"><use href="#t-beam"/></svg>梁<i>(L)</i></span></div>
                                <div class="leaf"><span class="leaf-body"><svg class="ico"><use href="#t-ring"/></svg>圈梁<i>(E)</i></span></div>
                            </div>
                            <div class="group"><span class="chev"></span><svg class="ico"><use href="#folder"/></svg><span>板</span></div>
                            <div class="kids">
                                <div class="leaf"><span class="leaf-body"><svg class="ico"><use href="#t-slab"/></svg>现浇板<i>(B)</i></span></div>
                                <div class="leaf"><span class="leaf-body"><svg class="ico"><use href="#t-spiral"/></svg>螺旋板<i>(B)</i></span></div>
                                <div class="leaf"><span class="leaf-body"><svg class="ico"><use href="#t-cap"/></svg>柱帽<i>(V)</i></span></div>
                                <div class="leaf"><span class="leaf-body"><svg class="ico"><use href="#t-hole"/></svg>板洞<i>(N)</i></span></div>
                                <div class="leaf"><span class="leaf-body"><svg class="ico"><use href="#t-grid1"/></svg>板受力筋<i>(S)</i></span></div>
                                <div class="leaf"><span class="leaf-body"><svg class="ico"><use href="#t-grid2"/></svg>板负筋<i>(F)</i></span></div>
                                <div class="leaf"><span class="leaf-body"><svg class="ico"><use href="#t-band"/></svg>楼层板带<i>(H)</i></span></div>
                            </div>
                            <div class="group"><span class="chev"></span><svg class="ico"><use href="#folder"/></svg><span>基础</span></div>
                            <div class="kids">
                                <div class="leaf"><span class="leaf-body"><svg class="ico"><use href="#t-fbeam"/></svg>基础梁<i>(F)</i></span></div>
                                <div class="leaf"><span class="leaf-body"><svg class="ico"><use href="#t-raft"/></svg>筏板基础<i>(M)</i></span></div>
                                <div class="leaf"><span class="leaf-body"><svg class="ico"><use href="#t-pit"/></svg>集水坑<i>(K)</i></span></div>
                                <div class="leaf"><span class="leaf-body"><svg class="ico"><use href="#t-pier"/></svg>柱墩<i>(Y)</i></span></div>
                                <div class="leaf"><span class="leaf-body"><svg class="ico"><use href="#t-grid1"/></svg>筏板主筋<i>(R)</i></span></div>
                                <div class="leaf"><span class="leaf-body"><svg class="ico"><use href="#t-grid2"/></svg>筏板负筋<i>(X)</i></span></div>
                                <div class="leaf"><span class="leaf-body"><svg class="ico"><use href="#t-iso"/></svg>独立基础<i>(P)</i></span></div>
                                <div class="leaf"><span class="leaf-body"><svg class="ico"><use href="#t-strip"/></svg>条形基础<i>(T)</i></span></div>
                                <div class="leaf"><span class="leaf-body"><svg class="ico"><use href="#t-pile"/></svg>桩承台<i>(V)</i></span></div>
                                <div class="leaf"><span class="leaf-body"><svg class="ico"><use href="#t-fbeam"/></svg>承台梁<i>(F)</i></span></div>
                                <div class="leaf"><span class="leaf-body"><svg class="ico"><use href="#t-pile2"/></svg>桩<i>(U)</i></span></div>
                                <div class="leaf"><span class="leaf-body"><svg class="ico"><use href="#t-band"/></svg>基础板带<i>(W)</i></span></div>
                            </div>
                            <div class="group"><span class="chev"></span><svg class="ico"><use href="#folder"/></svg></div>
                        </div>
                        <div class="vscroll">
                            <span class="sb-up"></span>
                            <span class="sb-thumb"></span>
                            <span class="sb-down"></span>
                        </div>
                    </div>
                    <div class="hscroll">
                        <span class="sb-left"></span>
                        <span class="hs-thumb"></span>
                        <span class="sb-right"></span>
                    </div>
                </div>
                <button class="nav-btn">单构件输入</button>
                <button class="nav-btn">报表预览</button>
            </aside>

            <main class="main">
                <div class="tbrow tb-edit">
                    <div class="tbgroup">
                        <span class="gripper"></span>
                        <span class="tool"><svg class="ico"><use href="#erase"/></svg><span>删除</span></span>
                        <span class="sep"></span>
                        <span class="tool"><svg class="ico"><use href="#copy"/></svg><span>复制</span></span>
                        <span class="tool"><svg class="ico"><use href="#mirror"/></svg><span>镜像</span></span>
                        <span class="sep"></span>
                        <span class="tool"><svg class="ico"><use href="#move"/></svg><span>移动</span></span>
                        <span class="tool"><svg class="ico"><use href="#rotate"/></svg><span>旋转</span></span>
                        <span class="sep"></span>
                        <span class="tool"><svg class="ico"><use href="#extend"/></svg><span>延伸</span></span>
                        <span class="tool"><svg class="ico"><use href="#trim"/></svg><span>修剪</span></span>
                        <span class="sep"></span>
                        <span class="tool"><svg class="ico"><use href="#break"/></svg><span>打断</span></span>
                        <span class="tool"><svg class="ico"><use href="#merge"/></svg><span>合并</span></span>
                        <span class="tool off"><svg class="ico"><use href="#split"/></svg><span>分割</span></span>
                        <span class="sep"></span>
                        <span class="tool"><svg class="ico"><use href="#align"/></svg><span>对齐</span><i class="caret c-t"></i></span>
                        <span class="tool"><svg class="ico"><use href="#offset"/></svg><span>偏移</span></span>
                        <span class="tool"><svg class="ico"><use href="#stretch"/></svg><span>拉伸</span></span>
                        <span class="sep"></span>
                        <span class="tool off last"><svg class="ico"><use href="#grip"/></svg><span>设置夹点</span></span>
                    </div>
                </div>

                <div class="tbrow tb-layer">
                    <div class="tbgroup">
                        <span class="combo">第7层<i class="caret"></i></span>
                        <span class="combo">梁<i class="caret"></i></span>
                        <span class="combo">梁<i class="caret"></i></span>
                        <span class="combo">KL-3<i class="caret"></i></span>
                        <span class="combo">分层1<i class="caret"></i></span>
                        <span class="sep"></span>
                        <span class="tool"><svg class="ico"><use href="#prop"/></svg><span>属性</span></span>
                        <span class="tool"><svg class="ico"><use href="#editbar"/></svg><span>编辑钢筋</span></span>
                        <span class="tool"><svg class="ico"><use href="#list"/></svg><span>构件列表</span></span>
                        <span class="tool last"><svg class="ico"><use href="#pick"/></svg><span>拾取构件</span></span>
                    </div>
                    <div class="tbgroup g-axis">
                        <span class="gripper"></span>
                        <span class="tool"><svg class="ico"><use href="#twopt"/></svg><span>两点</span></span>
                        <span class="tool"><svg class="ico"><use href="#para"/></svg><span>平行</span></span>
                        <span class="tool"><svg class="ico"><use href="#angle"/></svg><span>点角</span><i class="caret"></i></span>
                        <span class="tool"><svg class="ico"><use href="#arc3"/></svg><span>三点辅轴</span><i class="caret"></i></span>
                        <span class="tool on"><svg class="ico"><use href="#erase"/></svg><span>删除辅轴</span></span>
                        <span class="tool last"><svg class="ico"><use href="#dim"/></svg><span>尺寸标注</span><i class="caret"></i></span>
                    </div>
                </div>

                <div class="tbrow tb-draw">
                    <div class="tbgroup g-draw">
                        <span class="gripper"></span>
                        <span class="tool"><svg class="ico"><use href="#arrow"/></svg><span>选择</span><i class="caret"></i></span>
                        <span class="sep"></span>
                        <span class="tool"><svg class="ico"><use href="#line"/></svg><span>直线</span></span>
                        <span class="tool"><svg class="ico"><use href="#ptlen"/></svg><span>点加长度</span></span>
                        <span class="tool"><svg class="ico"><use href="#arc3"/></svg><span>三点画弧</span><i class="caret"></i></span>
                        <span class="combo combo-empty"><i class="caret"></i></span>
                        <span class="tool"><svg class="ico"><use href="#rect"/></svg><span>矩形</span></span>
                        <span class="sep"></span>
                        <span class="tool"><svg class="ico"><use href="#smart"/></svg><span>智能布置</span><i class="caret c-t"></i></span>
                        <span class="sep"></span>
                        <span class="tool"><svg class="ico"><use href="#beamedit"/></svg><span>修改梁段属性</span></span>
                        <span class="tool"><svg class="ico"><use href="#origin"/></svg><span>原位标注</span><i class="caret"></i></span>
                        <span class="tool tight"><svg class="ico"><use href="#repick"/></svg><span>重提梁跨</span><i class="caret"></i></span>
                        <span class="tool tight"><svg class="ico"><use href="#brush"/></svg><span>梁跨数据复制</span><i class="caret"></i></span>
                        <span class="tool tight"><svg class="ico"><use href="#recog"/></svg><span>批量识别梁支座</span></span>
                        <span class="tool"><svg class="ico"><use href="#samename"/></svg><span>应用到同名梁</span></span>
                        <span class="more more-end">»</span>
                    </div>
                    <div class="tbgroup g-stub"><span class="gripper"></span></div>
                </div>

                <!-- Scene, in page coordinates -->
                <svg class="scene" viewBox="170 168 1196 506">
                    <rect x="170" y="168" width="1196" height="506" fill="#000"/>
                    <g class="crisp" fill="none" stroke="#008a00">
                        <path d="M455 168L453 197M466.500 168L465.500 197M1052.500 198L1049.500 265"/>
                        <path d="M453 485L987 546M443.500 545L438 674M445.500 536L476 522M445.500 543L489 523"/>
                        <path d="M394.500 168l9 3 4 9-3 9-9.500 4-9-4-4-9 4-9z"/>
                        <path d="M180 644l4 2 3-2"/>
                    </g>
                    <text class="scene-six" x="394.500" y="186">6</text>
                    <path class="crisp" d="M426.500 660L553 674M365.500 665v9M437 662v12M425 672v2" fill="none" stroke="#f00"/>
                    <g class="crisp">
                        <path d="M214 168L432 194L431 217L170 187V168z" fill="#aaa"/>
                        <path d="M170 187L431 217L410 361L468.500 368L426 672L170 643z" fill="#878787"/>
                        <path d="M1087.600 269L1366 301V325L1086.700 293z" fill="#aaa"/>
                        <path d="M1086.700 293L1366 325V674H969L1005.700 430L1066.500 437z" fill="#878787"/>
                        <path d="M432 194L1087.600 269L1086.700 293L431 217z" fill="#00e600"/>
                        <path d="M431 217L1086.700 293L1066.500 437L1005.700 430L998 477L848 412L770 403L629 387L463 416L468.500 368L410 361z" fill="#00b000"/>
                    </g>
                    <path d="M468.500 368L629 387M848 412L1005 428" fill="none" stroke="#00e600" stroke-dasharray="1 7"/>
                    <g fill="none" stroke="#a6a6a6" stroke-width="0.800">
                        <circle cx="767" cy="421" r="225"/>
                        <circle cx="767" cy="196" r="14"/>
                        <circle cx="767" cy="646" r="14"/>
                        <circle cx="542" cy="421" r="14"/>
                        <circle cx="992" cy="421" r="14"/>
                        <path d="M753 196h14M767 646h-14M542 407v28M992 407v28"/>
                    </g>
                    <text class="scene-num" x="702" y="578">3300</text>
                    <g fill="none">
                        <path d="M226 624L227 596" stroke="#00e600" stroke-width="3"/>
                        <path d="M225 624L229 594" stroke="#0080ff" stroke-width="4"/>
                        <path d="M226 624L264 630" stroke="#f00" stroke-width="4"/>
                        <path d="M218 580h9l-8 9h9" stroke="#0080ff"/>
                        <path d="M236 598l4 4 4-4M240 602v6" stroke="#00e600"/>
                        <path d="M263 616l9 10M272 616l-9 10" stroke="#f00"/>
                    </g>
                    <path d="M230 586l4 9h-8z" fill="#0080ff"/>
                    <path d="M273 630.500l-10-3v6z" fill="#f00"/>
                </svg>

                <div class="tbrow tb-bottom">
                    <div class="tbgroup">
                        <span class="gripper"></span>
                        <span class="tool"><svg class="ico"><use href="#ortho"/></svg><span>正交</span></span>
                        <span class="tool on"><svg class="ico"><use href="#snap"/></svg><span>对象捕捉</span></span>
                        <span class="tool last">
                            <svg class="ico" viewBox="0 0 16 16"><path d="M1 1h14M1 4h14M1 1v4M15 1v4" stroke="#c03030"/><path d="M2 7h12v8H2z" fill="#fff" stroke="#333"/><text class="ico-num" x="8" y="14">12</text></svg>
                            <span>动态输入</span>
                        </span>
                    </div>
                    <div class="tbgroup g-snap">
                        <span class="tool"><svg class="ico"><use href="#cross"/></svg><span>交点</span></span>
                        <span class="tool on"><svg class="ico"><use href="#perp"/></svg><span>垂点</span></span>
                        <span class="tool on"><svg class="ico"><use href="#mid"/></svg><span>中点</span></span>
                        <span class="tool"><svg class="ico"><use href="#vertex"/></svg><span>顶点</span></span>
                        <span class="tool last"><svg class="ico"><use href="#coord"/></svg><span>坐标</span></span>
                    </div>
                    <div class="tbgroup g-offset">
                        <span class="gripper"></span>
                        <span class="combo combo-offset">不偏移<i class="caret"></i></span>
                        <span class="sep"></span>
                        <span class="dim-label">X=</span>
                        <span class="spin">0<i class="spin-arrows"></i></span>
                        <span class="dim-label">mm Y=</span>
                        <span class="spin">0<i class="spin-arrows"></i></span>
                        <span class="dim-label">mm</span>
                        <span class="sep"></span>
                        <span class="check"></span>
                        <span class="rot-label">旋转</span>
                        <span class="spin spin-wide">0.000<i class="spin-arrows"></i></span>
                        <span class="deg">°</span>
                    </div>
                </div>
            </main>
        </div>

        <div class="statusbar">
            <span class="st st-1">X=110719 Y=4921</span>
            <span class="st st-2">层高:2.8m</span>
            <span class="st st-3">底标高:20.35m</span>
            <span class="st st-4">0</span>
            <span class="st st-5"></span>
            <span class="st st-6">494.6 FPS</span>
        </div>

        <footer class="taskbar">
            <div class="start"><svg class="tk-16"><use href="#win"/></svg></div>
            <div class="search">
                <span class="cortana"></span>
                <span class="search-text">在这里输入你要搜索的内容</span>
                <svg class="tk-16 search-mic"><use href="#mic"/></svg>
            </div>
            <div class="tk-apps">
                <span class="tk tk-task"><svg class="tk-20"><use href="#taskview"/></svg></span>
                <span class="tk tk-fan"><svg class="tk-24"><use href="#fan"/></svg></span>
                <span class="tk tk-ie"><span class="glyph-ie white">e</span></span>
                <span class="tk tk-swirl"><svg class="tk-20"><use href="#swirl"/></svg><svg class="tk-bell"><use href="#bell"/></svg></span>
                <span class="tk-sep"></span>
                <span class="tk"><span class="glyph-edge">e</span></span>
                <span class="tk"><span class="glyph-ie blue">e</span></span>
                <span class="tk"><svg class="tk-24"><use href="#explorer"/></svg></span>
                <span class="tk run"><svg class="tk-24"><use href="#ball"/></svg></span>
                <span class="tk run"><svg class="tk-24"><use href="#swoosh"/></svg></span>
                <span class="tk run active"><svg class="tk-24"><use href="#app"/></svg></span>
                <span class="tk run"><svg class="tk-24"><use href="#note"/></svg></span>
                <span class="tk run"><span class="help">?</span></span>
                <span class="tk-sep tk-sep-2"></span>
            </div>
            <div class="tray">
                <span class="tray-link">链接</span>
                <svg class="tray-up" viewBox="0 0 12 7"><path d="M0 7l6-6 6 6" fill="none" stroke="#fff"/></svg>
                <svg class="ico tray-bell"><use href="#bell"/></svg>
                <svg class="ico"><use href="#batt"/></svg>
                <svg class="ico"><use href="#wifi"/></svg>
                <svg class="ico"><use href="#vol"/></svg>
                <svg class="tray-kbd"><use href="#kbd"/></svg>
                <span class="tray-ime">中</span>
                <span class="tray-s">S</span>
                <div class="clock"><span>14:02</span><span>2018/8/2</span></div>
                <span class="msg"><svg class="tk-20"><use href="#msg"/></svg><b>1</b></span>
            </div>
        </footer>
    </div>
</body>

</html>
```

FILE: styles.css
```css
* {
    margin: 0;
    padding: 0;
    box-sizing: border-box;
}

html,
body {
    width: 1366px;
    height: 768px;
    overflow: hidden;
}

body {
    background-color: #fff;
    color: #222;
    font-family: "Noto Sans CJK SC", "Liberation Sans", sans-serif;
    font-size: 12px;
    line-height: 16px;
}

.defs {
    position: absolute;
}

.app {
    display: flex;
    flex-direction: column;
    width: 1366px;
    height: 768px;
}

.ico {
    width: 16px;
    height: 16px;
    flex: none;
}

/* Title bar */
.titlebar {
    display: flex;
    align-items: center;
    height: 23px;
    padding-left: 2px;
    position: relative;
    background-color: #fff;
}

.title-text {
    margin-left: 5px;
    white-space: pre;
}

.title-path {
    letter-spacing: 0.44px;
}

.score {
    position: absolute;
    left: 780px;
    top: -26px;
    width: 44px;
    height: 44px;
    padding-top: 26px;
    border-radius: 50%;
    background-color: #4caf3c;
    box-shadow: 0 1px 3px rgba(0, 0, 0, 0.6);
    color: #fff;
    font-weight: bold;
    text-align: center;
}

.ime {
    position: absolute;
    left: 968px;
    top: 3px;
    display: flex;
    align-items: center;
}

.ime-logo {
    width: 28px;
    height: 24px;
    border-radius: 4px;
    background-color: #f0501e;
    color: #fff;
    font-family: "Liberation Sans", sans-serif;
    font-size: 24px;
    font-weight: bold;
    line-height: 24px;
    text-align: center;
    transform: rotate(-8deg);
}

.ime-bar {
    display: flex;
    align-items: center;
    gap: 6px;
    width: 178px;
    height: 24px;
    padding-left: 5px;
    border: 1px solid #b4c4d4;
    background-color: #fff;
    color: #2a78c8;
}

.ime-bar b {
    font-size: 14px;
}

.ime-dot {
    width: 18px;
    text-align: center;
    font-weight: bold;
}

.winbtns {
    position: absolute;
    left: 1240px;
    top: 0;
    display: flex;
    align-items: center;
    height: 20px;
}

.win-min {
    width: 11px;
    height: 1px;
    background-color: #111;
}

.win-max {
    width: 10px;
    height: 10px;
    margin-left: 39px;
    border: 1px solid #111;
    box-shadow: 2px -2px 0 -1px #fff, 2px -2px 0 0 #111;
}

.win-close {
    width: 11px;
    height: 11px;
    margin-left: 35px;
}

/* Menu bar */
.menubar {
    display: flex;
    align-items: center;
    height: 31px;
    padding-left: 7px;
    background-color: #f5f5f5;
    white-space: nowrap;
    letter-spacing: 0.12px;
}

.menubar > span {
    margin-right: 10px;
}

.menubar > .menu-last {
    margin-right: 6px;
}

.menu-tool {
    margin-right: 2px !important;
}

.news {
    width: 188px;
    height: 31px;
    margin: 0 5px 0 7px !important;
    padding-left: 29px;
    background-color: #fbfbfb;
    color: #4a7a10;
    line-height: 31px;
}

.beans {
    margin-left: 10px;
}

.notify {
    margin-left: -4px;
    color: #2a78e0;
}

.more {
    font-size: 13px;
    font-weight: bold;
    line-height: 10px;
    align-self: flex-start;
    margin-top: 3px;
}

.menu-more {
    margin-left: 42px;
    margin-right: 0 !important;
}

/* Toolbars */
.tbrow {
    display: flex;
    align-items: flex-start;
    gap: 2px;
    white-space: nowrap;
}

.tbrow-first {
    height: 30px;
    gap: 1px;
}

.tbgroup {
    display: flex;
    align-items: center;
    height: 100%;
    padding: 0 5px 0 4px;
    border-radius: 3px;
    background-color: #f5f5f5;
}

.tbrow-first .tbgroup {
    height: 26px;
}

.g-file {
    flex: none;
    width: 152px;
    padding-left: 0;
}

.g-file .sep {
    margin: 0 7px;
}

.g-file .more {
    margin-left: 18px;
}

.g-calc {
    flex: none;
    width: 551px;
    padding-left: 3px;
}

.g-calc .tool {
    margin-right: 7px;
}

.g-calc .more {
    margin-left: 32px;
}

.g-view {
    flex: 1;
    padding-left: 0;
    position: relative;
}

.g-view .tool {
    margin-right: 7px;
}

.more-end {
    position: absolute;
    right: 6px;
    top: 0;
}

.g-view .more-end {
    right: 2px;
}

.ml4 {
    margin-left: 4px;
}

.ml8 {
    margin-left: 8px;
}

.tool {
    display: inline-flex;
    align-items: center;
    gap: 4px;
    margin-right: 8px;
    flex: none;
}

.tool.off {
    color: #a8a8a8;
}

.tool.on {
    height: 23px;
    margin-left: -3px;
    margin-right: 3px;
    padding: 0 3px 0 2px;
    border: 1px solid #0078d7;
    background-color: #e5f1fb;
}

.g-axis .tool.on {
    background-color: #b9d9f4;
}

.tool.last {
    margin-right: 0;
}

.tool.tight {
    margin-right: 7px;
}

.tool-white {
    height: 26px;
    padding-left: 3px;
    background-color: #fff;
}

.sigma {
    width: 16px;
    font-family: "Liberation Serif", serif;
    font-size: 15px;
    font-weight: bold;
    text-align: center;
    color: #111;
}

.caret {
    display: inline-block;
    flex: none;
    width: 0;
    height: 0;
    margin: 0 1px 0 2px;
    border-style: solid;
    border-width: 3px 3px 0;
    border-color: #222 transparent transparent;
}

.c-s {
    margin: 0 6px;
}

.c-t {
    margin: 0 -1px 0 -2px;
}

.sep {
    flex: none;
    width: 1px;
    height: 20px;
    margin: 0 5px 0 -1px;
    background-color: #c8c8c8;
}

.gripper {
    flex: none;
    width: 2px;
    height: 18px;
    margin-right: 3px;
    background: repeating-linear-gradient(#999 0 2px, transparent 2px 4px);
}

.main {
    flex: 1;
    display: flex;
    flex-direction: column;
    margin-left: 5px;
    min-width: 0;
}

.tb-edit {
    height: 23px;
    margin-left: 1px;
}

.tb-edit .gripper {
    margin-right: 4px;
}

.tb-edit .tool {
    margin-right: 7.5px;
}

.tb-edit .tool.last {
    margin-right: 0;
}

.tb-layer {
    height: 25px;
    margin-top: 4px;
    margin-left: 1px;
}

.tb-layer .sep {
    margin-right: 7px;
}

.tb-layer .tool {
    margin-right: 7px;
}

.tb-layer .tool.on {
    margin-right: 3px;
}

.tb-layer .tool.last {
    margin-right: 0;
}

.g-axis .tool {
    margin-right: 8px;
}

.tb-draw {
    height: 27px;
    margin-top: 4px;
    margin-left: 1px;
}

.g-draw {
    flex: none;
    width: 1161px;
    position: relative;
}

.g-stub {
    flex: 1;
}

.combo {
    display: flex;
    align-items: center;
    justify-content: space-between;
    flex: none;
    width: 68px;
    height: 25px;
    margin-right: 4px;
    padding: 0 3px 0 2px;
    background-color: #fff;
}

.tb-layer .combo:first-child {
    width: 56px;
    margin-left: 4px;
}

.combo-empty {
    justify-content: flex-end;
    width: 51px;
    height: 27px;
    margin-right: 8px;
    margin-left: -4px;
}

.combo-offset {
    width: 58px;
    height: 23px;
    margin-right: 1px;
    padding-left: 0;
}

.scene {
    display: block;
    width: 1196px;
    height: 506px;
    margin-top: 1px;
    margin-left: 0;
}

.crisp {
    shape-rendering: crispEdges;
}

.scene-six,
.scene-num {
    fill: #ccc;
    font-family: "Liberation Sans", sans-serif;
    text-anchor: middle;
}

.scene-six {
    font-size: 13px;
}

.scene-num {
    font-size: 15px;
}

.ico-num {
    font-family: "Liberation Sans", sans-serif;
    font-size: 7px;
    text-anchor: middle;
}

.tb-bottom {
    height: 28px;
    margin-top: 2px;
    margin-left: 1px;
}

.g-snap {
    padding-left: 9px;
    padding-right: 3px;
}

.g-snap .tool:first-child {
    margin-right: 5px;
}

.g-snap .tool.on {
    margin-right: 0;
    margin-left: 0;
}

.g-snap .tool:nth-child(4) {
    margin-left: 4px;
    margin-right: 6px;
}

.g-offset .sep {
    margin: 0 3px;
}

.dim-label {
    font-family: "Liberation Sans", sans-serif;
    word-spacing: 6px;
    color: #777;
    margin-right: 1px;
}

.spin {
    display: flex;
    align-items: center;
    justify-content: flex-end;
    flex: none;
    width: 58px;
    height: 23px;
    padding-right: 19px;
    border: 1px solid #7a7a7a;
    background-color: #f5f5f5;
    color: #777;
    font-size: 13px;
    position: relative;
}

.spin + .dim-label {
    margin-left: 1px;
}

.spin-wide {
    width: 68px;
}

.spin-arrows {
    position: absolute;
    right: 4px;
    top: 4px;
    width: 6px;
    height: 13px;
}

.spin-arrows::before,
.spin-arrows::after {
    content: "";
    position: absolute;
    left: 0;
    border-style: solid;
    border-color: transparent;
}

.spin-arrows::before {
    top: 0;
    border-width: 0 3px 3px;
    border-bottom-color: #666;
}

.spin-arrows::after {
    bottom: 0;
    border-width: 3px 3px 0;
    border-top-color: #666;
}

.check {
    flex: none;
    width: 11px;
    height: 11px;
    margin-right: 10px;
    border: 1px solid #888;
    background-color: #fff;
}

.rot-label {
    margin-right: 3px;
}

.deg {
    margin-left: 3px;
    color: #777;
}

/* Left nav */
.workspace {
    display: flex;
    height: 624px;
}

.nav {
    display: flex;
    flex-direction: column;
    flex: none;
    width: 165px;
    height: 622px;
}

.nav-head {
    display: flex;
    align-items: center;
    height: 16px;
    padding-left: 1px;
    background-color: #0a5ce0;
    color: #fff;
    position: relative;
}

.nav-pin {
    position: absolute;
    left: 134px;
    top: 3px;
    width: 9px;
    height: 11px;
}

.nav-x {
    position: absolute;
    left: 152px;
    top: 4px;
    width: 9px;
    height: 9px;
}

.nav-btn {
    flex: none;
    width: 165px;
    height: 22px;
    margin-bottom: 1px;
    border: 1px solid #a0a0a0;
    background-color: #f0f0f0;
    color: #222;
    font: inherit;
}

.nav-box {
    flex: none;
    display: flex;
    flex-direction: column;
    height: 515px;
    margin: -1px 2px 1px;
    border: 1px solid #a0a0a0;
    background-color: #f0f0f0;
}

.nav-tools {
    display: flex;
    align-items: center;
    gap: 4px;
    height: 27px;
    padding-left: 5px;
}

.ico-l {
    width: 18px;
    height: 18px;
}

.tree-wrap {
    display: flex;
    height: 468px;
    background-color: #fff;
}

.tree {
    flex: 1;
    overflow: hidden;
    padding-top: 1px;
    font-family: "Noto Sans CJK SC", sans-serif;
    background: repeating-linear-gradient(#888 0 1px, transparent 1px 2px) 12px 0 / 1px 100% no-repeat;
    background-color: #fff;
}

.tree i {
    font-family: "Liberation Mono", monospace;
    font-size: 12px;
    letter-spacing: -1.2px;
    font-style: normal;
}

.group {
    display: flex;
    align-items: center;
    gap: 4px;
    height: 16px;
    padding-left: 8px;
    background-color: #fff;
}

.chev {
    width: 8px;
    height: 8px;
    margin-right: 3px;
    border-right: 1.500px solid #555;
    border-bottom: 1.500px solid #555;
    transform: scale(0.8) translateY(-2px) rotate(45deg);
}

.leaf {
    display: flex;
    align-items: center;
    height: 16px;
    padding-left: 32px;
    background: repeating-linear-gradient(#888 0 1px, transparent 1px 2px) 31px 0 / 1px 100% no-repeat;
}

.leaf:last-child {
    background-size: 1px 8px;
}

.leaf::before {
    content: "";
    width: 8px;
    border-bottom: 1px dotted #888;
}

.leaf-body {
    display: flex;
    align-items: center;
    height: 16px;
    padding: 0 3px;
}

.leaf-body .ico {
    margin-right: 4px;
}

.sel {
    background-color: #d9d9d9;
}

.vscroll {
    flex: none;
    display: flex;
    flex-direction: column;
    align-items: center;
    justify-content: flex-start;
    width: 15px;
    background-color: #f0f0f0;
    position: relative;
}

.sb-thumb {
    position: absolute;
    left: 0;
    top: 191px;
    width: 15px;
    height: 209px;
    background-color: #cdcdcd;
}

.sb-up,
.sb-down,
.sb-left,
.sb-right {
    position: absolute;
    width: 8px;
    height: 8px;
    border-left: 2px solid #555;
    border-top: 2px solid #555;
}

.sb-up {
    left: 4px;
    top: 8px;
    transform: rotate(45deg);
}

.sb-down {
    left: 4px;
    bottom: 6px;
    transform: rotate(225deg);
}

.hscroll {
    flex: none;
    height: 17px;
    background-color: #f0f0f0;
    position: relative;
}

.hs-thumb {
    position: absolute;
    left: 18px;
    top: 0;
    width: 102px;
    height: 17px;
    background-color: #cdcdcd;
}

.sb-left {
    left: 6px;
    top: 5px;
    transform: rotate(-45deg);
}

.sb-right {
    right: 21px;
    top: 5px;
    transform: rotate(135deg);
}

/* Status bar */
.statusbar {
    display: flex;
    gap: 3px;
    height: 20px;
    margin-top: 0;
    padding: 0 1px;
    background-color: #fff;
    font-family: "Liberation Mono", "Noto Sans CJK SC", monospace;
    font-size: 10px;
    line-height: 18px;
}

.st {
    border: 1px solid #e4e4e4;
    background-color: #f4f4f4;
    padding-left: 1px;
    white-space: nowrap;
}

.st-1 {
    width: 146px;
}

.st-2 {
    width: 77px;
}

.st-3 {
    width: 97px;
}

.st-4 {
    width: 48px;
}

.st-5 {
    flex: 1;
}

.st-6 {
    width: 69px;
}

/* Taskbar */
.taskbar {
    display: flex;
    flex: 1;
    align-items: stretch;
    background-color: #07131a;
    color: #fff;
}

.tk-16 {
    width: 16px;
    height: 16px;
}

.tk-20 {
    width: 20px;
    height: 16px;
}

.tk-24 {
    width: 24px;
    height: 24px;
}

.start {
    display: flex;
    align-items: center;
    justify-content: center;
    width: 48px;
    background-color: #000;
}

.search {
    display: flex;
    align-items: center;
    width: 344px;
    padding-left: 10px;
    background-color: #2f2f2f;
    color: #8d8d8d;
}

.cortana {
    width: 18px;
    height: 18px;
    border: 2px solid #e4e4e4;
    border-radius: 50%;
}

.search-text {
    margin-left: 8px;
    font-size: 14px;
    width: 285px;
}

.tk-apps {
    display: flex;
    align-items: center;
}

.tk {
    display: flex;
    align-items: center;
    justify-content: center;
    flex: none;
    width: 41px;
    height: 40px;
    position: relative;
}

.tk-task {
    width: 46px;
    margin-right: 3px;
}

.tk-fan {
    width: 51px;
}

.tk-ie {
    width: 50px;
}

.tk-swirl {
    width: 56px;
}

.tk-bell {
    position: absolute;
    left: 28px;
    top: 3px;
    width: 14px;
    height: 14px;
    color: #f0b020;
}

.tk-sep {
    width: 2px;
    height: 22px;
    margin: 0 14px 0 3px;
    background-color: #3a4248;
}

.tk-sep-2 {
    margin: 0 0 0 16px;
}

.run::after {
    content: "";
    position: absolute;
    left: 4px;
    right: 4px;
    bottom: 0;
    height: 3px;
    background-color: #76b9ed;
}

.active {
    background-color: #2c3a42;
}

.glyph-ie,
.glyph-edge {
    font-family: "Liberation Sans", sans-serif;
    font-size: 30px;
    font-weight: bold;
    line-height: 30px;
}

.glyph-ie {
    position: relative;
}

/* ring round the IE letter */
.glyph-ie::after {
    content: "";
    position: absolute;
    left: -6px;
    top: 9px;
    width: 28px;
    height: 12px;
    border: 1.500px solid currentColor;
    border-radius: 50%;
    transform: rotate(-35deg);
}

.white {
    color: #eee;
}

.blue {
    color: #3aa0e8;
}

.blue::after {
    border-color: #e8c030;
}

.glyph-edge {
    color: #1e78e0;
}

.help {
    color: #f4e020;
    font-size: 24px;
    font-weight: bold;
    line-height: 24px;
    position: relative;
}

/* document under the question mark */
.help::before {
    content: "";
    position: absolute;
    left: -8px;
    top: 10px;
    width: 9px;
    height: 13px;
    background-color: #eee;
}

.tray {
    display: flex;
    flex: 1;
    align-items: center;
    position: relative;
}

.tray-link {
    margin-left: 10px;
    color: #ccc;
}

.tray-up {
    width: 12px;
    height: 7px;
    margin-left: 12px;
}

.tray-bell {
    margin-left: 32px;
    color: #fff;
}

.tray .ico {
    margin-right: 9px;
}

.tray-kbd {
    width: 24px;
    height: 16px;
    margin-left: 0;
}

.tray-ime {
    margin-left: 10px;
    font-size: 14px;
}

.tray-s {
    width: 14px;
    height: 15px;
    margin-left: 13px;
    border-radius: 3px;
    background-color: #f0501e;
    font-family: "Liberation Sans", sans-serif;
    font-size: 13px;
    font-weight: bold;
    line-height: 15px;
    text-align: center;
}

.clock {
    display: flex;
    flex-direction: column;
    align-items: center;
    gap: 3px;
    width: 56px;
    margin-left: 18px;
    letter-spacing: 0.2px;
}

.msg {
    position: absolute;
    left: 366px;
    top: 12px;
}

.msg b {
    position: absolute;
    left: 5px;
    top: 3px;
    width: 16px;
    height: 16px;
    border-radius: 50%;
    background-color: #444;
    font-size: 11px;
    line-height: 16px;
    text-align: center;
}
```
